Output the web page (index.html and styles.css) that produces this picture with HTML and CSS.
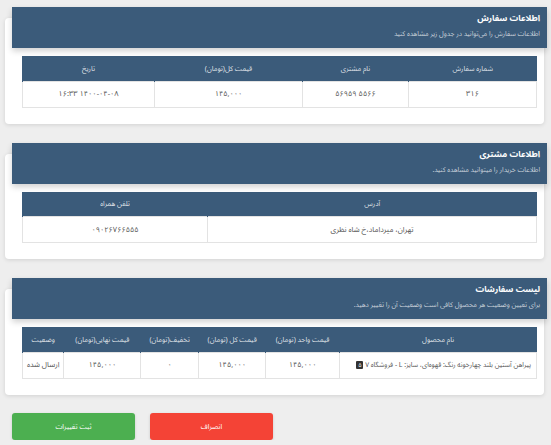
FILE: index.html
```html
<!DOCTYPE html>
<html lang="fa" dir="rtl">
	<head>
		<meta charset="UTF-8">
		<title>جزئیات سفارش</title>
		<link rel="stylesheet" href="styles.css">
	</head>
	<body>
		<div class="page">

			<div class="card">
				<div class="card-header">
					<h4>اطلاعات سفارش</h4>
					<p>اطلاعات سفارش را می‌توانید در جدول زیر مشاهده کنید</p>
				</div>
				<table class="info">
					<thead>
						<tr>
							<th class="c1">شماره سفارش</th>
							<th class="c2">نام مشتری</th>
							<th class="c3">قیمت کل(تومان)</th>
							<th>تاریخ</th>
						</tr>
					</thead>
					<tbody>
						<tr>
							<td>۳۱۶</td>
							<td>۵۵۶۶ ۵۶۹۵۹</td>
							<td>۱۴۵,۰۰۰</td>
							<td>۱۴۰۰-۰۴-۰۸ ۱۶:۳۳</td>
						</tr>
					</tbody>
				</table>
			</div>

			<div class="card">
				<div class="card-header">
					<h4>اطلاعات مشتری</h4>
					<p>اطلاعات خریدار را میتوانید مشاهده کنید.</p>
				</div>
				<table class="info">
					<thead>
						<tr>
							<th class="addr">آدرس</th>
							<th>تلفن همراه</th>
						</tr>
					</thead>
					<tbody>
						<tr>
							<td>تهران، میرداماد،خ شاه نظری</td>
							<td>۰۹۰۲۶۷۶۶۵۵۵</td>
						</tr>
					</tbody>
				</table>
			</div>

			<div class="card">
				<div class="card-header">
					<h4>لیست سفارشات</h4>
					<p>برای تعیین وضعیت هر محصول کافی است وضعیت آن را تغییر دهید.</p>
				</div>
				<table class="info items">
					<thead>
						<tr>
							<th class="p1">نام محصول</th>
							<th class="p2">قیمت واحد (تومان)</th>
							<th class="p3">قیمت کل (تومان)</th>
							<th class="p4">تخفیف(تومان)</th>
							<th class="p5">قیمت نهایی(تومان)</th>
							<th>وضعیت</th>
						</tr>
					</thead>
					<tbody>
						<tr>
							<td class="product">پیراهن آستین بلند چهارخونه رنگ: قهوه‌ای، سایز: L - فروشگاه ۷ <span class="badge">۵</span></td>
							<td>۱۴۵,۰۰۰</td>
							<td>۱۴۵,۰۰۰</td>
							<td>۰</td>
							<td>۱۴۵,۰۰۰</td>
							<td>ارسال شده</td>
						</tr>
					</tbody>
				</table>
			</div>

			<div class="actions">
				<a href="#" class="btn btn-save">ثبت تغییرات</a>
				<a href="#" class="btn btn-cancel">انصراف</a>
			</div>

		</div>
	</body>
</html>
```

FILE: styles.css
```css
html {
	box-sizing: border-box;
	font-family: "Noto Sans Arabic", "Noto Naskh Arabic", "Vazirmatn", "DejaVu Sans", sans-serif;
}
*, *:before, *:after {
	box-sizing: inherit;
}

body {
	margin: 0;
	background: #eeeeee;
	color: #555;
}

.page {
	padding: 18px 7px 0 5px;
}

/* کارت‌ها */
.card {
	background: #fff;
	border-radius: 4px;
	box-shadow: 0 1px 4px rgba(0, 0, 0, 0.12);
	padding: 0 7px 16px 17px;
	margin-bottom: 30px;
}

.card-header {
	position: relative;
	top: -11px;
	margin: 0 -10px -3px -10px;
	height: 41px;
	padding: 3px 7px 0;
	background: #3b5b7a;
	color: #fff;
	box-shadow: 0 3px 6px rgba(0, 0, 0, 0.18);
}

.card-header h4 {
	margin: 0;
	font-size: 8.5px;
	font-weight: bold;
	line-height: 16px;
}

.card-header p {
	margin: 2px 0 0;
	font-size: 6.8px;
	line-height: 13px;
	color: rgba(255, 255, 255, 0.72);
}

/* جدول‌ها */
table.info {
	width: 100%;
	border-collapse: collapse;
	font-size: 7.5px;
}

table.info th {
	height: 25px;
	background: #3b5b7a;
	color: rgba(255, 255, 255, 0.85);
	font-weight: normal;
	font-size: 7px;
	white-space: nowrap;
	padding: 0 3px;
	border-left: 1px solid #3b5b7a;
}

table.info td {
	height: 26px;
	text-align: center;
	color: #555;
	white-space: nowrap;
	border: 1px solid #e3e3e3;
	padding: 0 4px;
}

.c1 { width: 128px; }
.c2 { width: 106px; }
.c3 { width: 148px; }
.addr { width: 329px; }

.p1 { width: 199px; }
.p2 { width: 75px; }
.p3 { width: 69px; }
.p4 { width: 59px; }
.p5 { width: 79px; }

.items td {
	height: 34px;
}

.items td.product {
	text-align: right;
	font-size: 6.8px;
	padding-right: 5px;
}

.badge {
	display: inline-block;
	width: 7px;
	height: 8px;
	line-height: 8px;
	border-radius: 1px;
	background: #333;
	color: #fff;
	font-size: 6px;
	text-align: center;
	vertical-align: middle;
}

/* دکمه‌ها */
.actions {
	direction: ltr;
	display: flex;
	gap: 15px;
	padding-left: 7px;
	margin-top: -12px;
}

.btn {
	display: flex;
	align-items: center;
	justify-content: center;
	width: 123px;
	height: 27px;
	border-radius: 3px;
	font-size: 7px;
	color: #fff;
	text-decoration: none;
	box-shadow: 0 1px 3px rgba(0, 0, 0, 0.15);
}

.btn-save {
	background: #4caf50;
}

.btn-cancel {
	background: #f44336;
}
```
